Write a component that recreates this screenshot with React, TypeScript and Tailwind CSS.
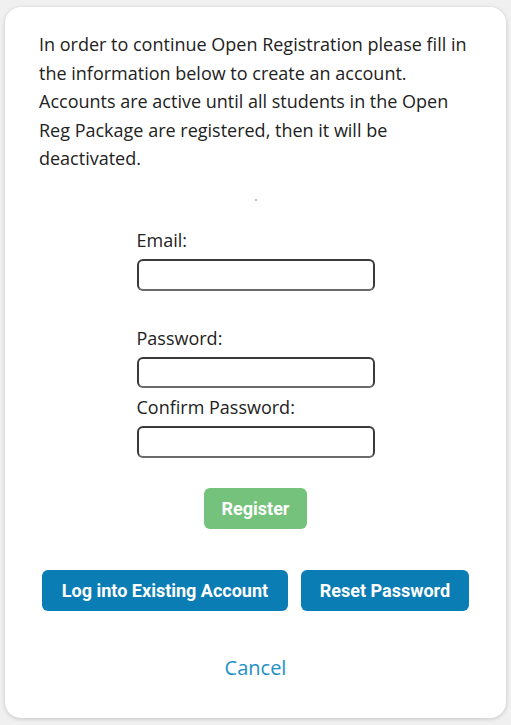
export default function App() {
  return (
    <div className="min-h-[725px] bg-[#f0f0f0] pt-[7px] px-[5px]" style={{ fontFamily: '"Open Sans", sans-serif' }}>
      <div className="h-[711px] rounded-2xl bg-white shadow-[0_1px_4px_rgba(0,0,0,0.18)] px-[34px] pt-[23px]">
        <p className="text-[18px] leading-[28.5px] text-[#222]">
          In order to continue Open Registration please fill in the information below to create an account.
          Accounts are active until all students in the Open Reg Package are registered, then it will be
          deactivated.
        </p>
        <div className="flex justify-center mt-[26px]">
          <span className="size-[2px] rounded-full bg-[#aaa]" />
        </div>
        <div className="mx-auto mt-[27px] w-[238px] text-[18px] text-[#222]">
          <label className="block leading-6">Email:</label>
          <input className="mt-[7px] block h-[32px] w-full rounded-md border-2 border-[#3a3a3a] border-b-[#6a6a6a]" />
          <label className="mt-[35px] block leading-6">Password:</label>
          <input type="password" className="mt-[7px] block h-[31px] w-full rounded-md border-2 border-[#3a3a3a] border-b-[#6a6a6a]" />
          <label className="mt-[7px] block leading-6">Confirm Password:</label>
          <input type="password" className="mt-[7px] block h-[32px] w-full rounded-md border-2 border-[#3a3a3a] border-b-[#6a6a6a]" />
        </div>
        <div className="flex justify-center mt-[30px]" style={{ fontFamily: 'Roboto, sans-serif' }}>
          <button className="h-[41px] w-[103px] rounded-md bg-[#74c27b] text-[18px] font-bold text-white">
            Register
          </button>
        </div>
        <div className="mt-[41px] flex justify-center gap-[13px]" style={{ fontFamily: 'Roboto, sans-serif' }}>
          <button className="h-[41px] w-[246px] rounded-md bg-[#0a7db5] text-[18px] font-bold text-white">
            Log into Existing Account
          </button>
          <button className="h-[41px] w-[168px] rounded-md bg-[#0a7db5] text-[18px] font-bold text-white">
            Reset Password
          </button>
        </div>
        <div className="mt-[45px] text-center text-[20px] leading-6 text-[#1e90c4]">
          <a>Cancel</a>
        </div>
      </div>
    </div>
  );
}
